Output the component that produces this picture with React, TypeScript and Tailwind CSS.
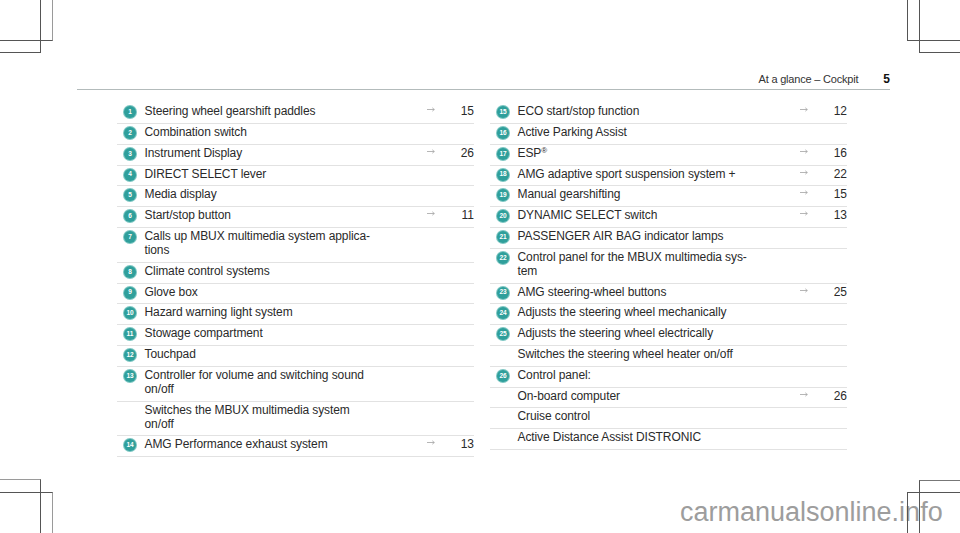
type Row = { n?: number; text: string[]; page?: number; sup?: string };

const left: Row[] = [
  { n: 1, text: ['Steering wheel gearshift paddles'], page: 15 },
  { n: 2, text: ['Combination switch'] },
  { n: 3, text: ['Instrument Display'], page: 26 },
  { n: 4, text: ['DIRECT SELECT lever'] },
  { n: 5, text: ['Media display'] },
  { n: 6, text: ['Start/stop button'], page: 11 },
  { n: 7, text: ['Calls up MBUX multimedia system applica-', 'tions'] },
  { n: 8, text: ['Climate control systems'] },
  { n: 9, text: ['Glove box'] },
  { n: 10, text: ['Hazard warning light system'] },
  { n: 11, text: ['Stowage compartment'] },
  { n: 12, text: ['Touchpad'] },
  { n: 13, text: ['Controller for volume and switching sound', 'on/off'] },
  { text: ['Switches the MBUX multimedia system', 'on/off'] },
  { n: 14, text: ['AMG Performance exhaust system'], page: 13 },
];

const right: Row[] = [
  { n: 15, text: ['ECO start/stop function'], page: 12 },
  { n: 16, text: ['Active Parking Assist'] },
  { n: 17, text: ['ESP'], sup: '®', page: 16 },
  { n: 18, text: ['AMG adaptive sport suspension system +'], page: 22 },
  { n: 19, text: ['Manual gearshifting'], page: 15 },
  { n: 20, text: ['DYNAMIC SELECT switch'], page: 13 },
  { n: 21, text: ['PASSENGER AIR BAG indicator lamps'] },
  { n: 22, text: ['Control panel for the MBUX multimedia sys-', 'tem'] },
  { n: 23, text: ['AMG steering-wheel buttons'], page: 25 },
  { n: 24, text: ['Adjusts the steering wheel mechanically'] },
  { n: 25, text: ['Adjusts the steering wheel electrically'] },
  { text: ['Switches the steering wheel heater on/off'] },
  { n: 26, text: ['Control panel:'] },
  { text: ['On-board computer'], page: 26 },
  { text: ['Cruise control'] },
  { text: ['Active Distance Assist DISTRONIC'] },
];

function Badge({ n }: { n: number }) {
  return (
    <span className="mt-[2px] flex h-[12px] w-[12px] items-center justify-center rounded-full bg-[#2f9f9b] text-[6.5px] font-bold leading-none text-white ring-1 ring-[#7cc6c2]">
      {n}
    </span>
  );
}

function Arrow() {
  return (
    <svg width="8" height="5" viewBox="0 0 8 5" className="mt-[3px]">
      <path d="M0 2.5H7.3M5.3 0.8L7.3 2.5L5.3 4.2" fill="none" stroke="#a3a3a3" strokeWidth="0.8" />
    </svg>
  );
}

function List({ rows }: { rows: Row[] }) {
  return (
    <div className="w-[357px]">
      {rows.map((r, i) => (
        <div key={i} className="flex items-start border-b border-[#e2e2e2] pt-[1px] pb-[4.8px] leading-[14px]">
          <div className="ml-[7px] w-[12px] shrink-0">{r.n && <Badge n={r.n} />}</div>
          <div className="ml-[8.5px] w-[266px] shrink-0 tracking-[-0.1px]">
            {r.text.map((t, j) => (
              <div key={j}>
                {t}
                {r.sup && <sup className="text-[8px]">{r.sup}</sup>}
              </div>
            ))}
          </div>
          <div className="flex w-[24px] justify-end">{r.page && <Arrow />}</div>
          <div className="flex-1 text-right">{r.page}</div>
        </div>
      ))}
    </div>
  );
}

const dark = 'border-[#555]';

export default function App() {
  return (
    <div className="flex h-[533px] w-[960px] flex-col overflow-hidden bg-white text-[12px] text-[#2a2a2a] font-['Liberation_Sans',Arial,sans-serif]">
      {/* top crop marks */}
      <div className="flex h-[53px] shrink-0 justify-between">
        <div className="grid">
          <div className={`col-start-1 row-start-1 h-[53px] w-[41px] border-b border-r ${dark}`} />
          <div className={`col-start-1 row-start-1 h-[41px] w-[53px] border-b border-r ${dark} border-r-[#9a9a9a]`} />
        </div>
        <div className="grid justify-items-end">
          <div className={`col-start-1 row-start-1 h-[41px] w-[53px] border-b border-l ${dark}`} />
          <div className={`col-start-1 row-start-1 h-[53px] w-[41px] border-b border-l ${dark}`} />
        </div>
      </div>

      <div className="ml-[77px] mt-[19px] flex w-[813px] items-end justify-end border-b border-[#b3bbbb] pb-[3px] leading-[14px]">
        <span className="text-[11px] tracking-[-0.2px] text-[#333]">At a glance – Cockpit</span>
        <span className="ml-[25px] font-bold text-[#111]">5</span>
      </div>

      <div className="mt-[13.2px] flex gap-[16px] pl-[117px]">
        <List rows={left} />
        <List rows={right} />
      </div>

      {/* bottom crop marks with watermark */}
      <div className="mt-auto grid h-[54px] shrink-0">
        <div className="col-start-1 row-start-1 ml-[680px] mt-[18px] self-start text-[27px] leading-[30px] text-[#9d9d9d]">
          carmanualsonline.info
        </div>
        <div className="col-start-1 row-start-1 grid self-end justify-self-start">
          <div className={`col-start-1 row-start-1 h-[54px] w-[41px] border-r border-t ${dark} border-t-[#9a9a9a]`} />
          <div className={`col-start-1 row-start-1 h-[41px] w-[53px] self-end border-r border-t ${dark} border-r-[#9a9a9a]`} />
        </div>
        <div className="col-start-1 row-start-1 grid self-end justify-self-end justify-items-end">
          <div className={`col-start-1 row-start-1 h-[41px] w-[53px] self-end border-l border-t ${dark}`} />
          <div className={`col-start-1 row-start-1 h-[53px] w-[41px] self-end border-l border-t ${dark} border-t-[#777]`} />
        </div>
      </div>
    </div>
  );
}
